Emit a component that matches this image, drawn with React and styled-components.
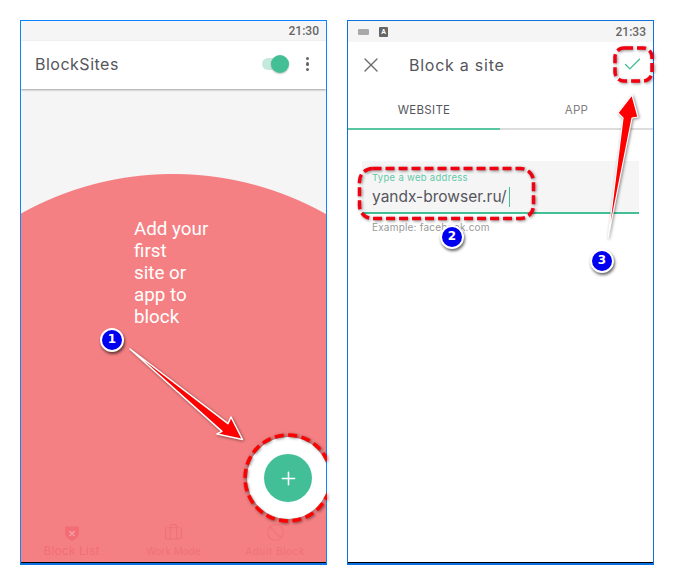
import React from "react";
import styled, { createGlobalStyle } from "styled-components";
import { Check, X, Briefcase, Ban, Plus } from "lucide-react";

const Global = createGlobalStyle`
  html, body { margin: 0; padding: 0; background: #fff; }
  body { font-family: "Roboto", "Liberation Sans", sans-serif; }
`;

const Page = styled.div`
  position: relative;
  width: 674px;
  height: 585px;
  box-sizing: border-box;
  padding: 20px;
  display: flex;
  gap: 20px;
  overflow: hidden;
`;

const Phone = styled.section`
  position: relative;
  isolation: isolate;
  width: 307px;
  height: 545px;
  box-sizing: border-box;
  border: 1px solid ${(p) => p.$edge};
  border-bottom: 2px solid #0a6fe0;
  display: flex;
  flex-direction: column;
  overflow: hidden;
  background: #fff;
`;

const BottomLine = styled.div`
  height: 1px;
  flex: none;
  background: #000;
`;

const StatusBar = styled.div`
  height: ${(p) => p.$h}px;
  flex: none;
  background: #f5f5f5;
  display: flex;
  align-items: center;
  justify-content: space-between;
  padding: 0 7px 0 10px;
  font: 500 12px "Roboto", sans-serif;
  color: #666;
`;

const StatusIcons = styled.div`
  display: flex;
  align-items: center;
  gap: 10px;
`;

const KeyIcon = styled.div`
  width: 11px;
  height: 6px;
  background: #a9a9a9;
  border-radius: 1px;
`;

const AIcon = styled.div`
  width: 9px;
  height: 10px;
  background: #666;
  border-radius: 1px;
  color: #fff;
  font: 700 7px/10px "Roboto", sans-serif;
  text-align: center;
`;

const Clock = styled.span`
  margin-left: auto;
`;

const AppBar = styled.header`
  height: 48px;
  flex: none;
  box-sizing: border-box;
  position: relative;
  z-index: 1;
  background: #fff;
  box-shadow: ${(p) => (p.$flat ? "none" : "0 1px 2px rgba(0, 0, 0, 0.35)")};
  display: flex;
  align-items: center;
  padding: 0 14px ${(p) => (p.$flat ? 3 : 2)}px;
`;

const Title = styled.h1`
  margin: 0;
  font: 400 16px "Inter", sans-serif;
  letter-spacing: 0.5px;
  color: #55565c;
  flex: 1;
`;

const Toggle = styled.div`
  position: relative;
  width: 22px;
  height: 12px;
  border-radius: 6px;
  background: #c5e9dd;
  margin-right: 22px;
`;

const Thumb = styled.div`
  position: absolute;
  top: -3px;
  right: -5px;
  width: 18px;
  height: 18px;
  border-radius: 50%;
  background: #43bf95;
  box-shadow: 0 1px 2px rgba(0, 0, 0, 0.25);
`;

const Dots = styled.div`
  display: flex;
  flex-direction: column;
  gap: 2px;
  margin-right: 3px;
`;

const Dot = styled.span`
  width: 3.5px;
  height: 3.5px;
  border-radius: 50%;
  background: #666;
`;

const Main = styled.main`
  flex: 1;
  display: flex;
  flex-direction: column;
  background: radial-gradient(circle at 152px 397px, #f58083 311.5px, #f5f5f5 312.5px);
`;

const Hero = styled.p`
  margin: 129px 0 0 113px;
  font: 400 18.8px/22px "Roboto", sans-serif;
  color: #fff;
  flex: 1;
`;

const Fab = styled.div`
  position: absolute;
  left: 226px;
  top: 416px;
  width: 82px;
  height: 82px;
  border-radius: 50%;
  background: #fff;
  box-shadow: 0 0 5px 1px rgba(90, 90, 90, 0.5);
  display: flex;
  align-items: center;
  justify-content: center;
`;

const FabInner = styled.div`
  width: 48px;
  height: 48px;
  border-radius: 50%;
  background: #43bf98;
  display: flex;
  align-items: center;
  justify-content: center;
  color: #fff;
`;

const Nav = styled.nav`
  height: 42px;
  display: grid;
  grid-template-columns: repeat(3, 1fr);
  padding-bottom: 5px;
`;

const NavItem = styled.div`
  display: flex;
  flex-direction: column;
  align-items: center;
  justify-content: flex-end;
  gap: 3px;
  color: ${(p) => p.$color};
  font: 400 ${(p) => p.$size}px/12px "Inter", sans-serif;
  letter-spacing: ${(p) => p.$ls}px;
  white-space: nowrap;
`;

const WhiteBody = styled.div`
  flex: 1;
  display: flex;
  flex-direction: column;
`;

const CloseSlot = styled.div`
  flex: none;
  width: 50px;
  display: flex;
  color: #6b6b6b;
  margin-left: -3px;
`;

const FormTitle = styled(Title)`
  letter-spacing: 0.75px;
`;

const CheckSlot = styled.div`
  color: #43bf95;
  display: flex;
  margin-right: -4px;
`;

const Tabs = styled.div`
  height: 40px;
  flex: none;
  display: grid;
  grid-template-columns: 152px 1fr;
`;

const Tab = styled.div`
  display: flex;
  align-items: center;
  justify-content: center;
  box-sizing: border-box;
  padding-top: 2px;
  font: 400 11.5px "Inter", sans-serif;
  letter-spacing: 0.3px;
  color: ${(p) => (p.$active ? "#55565c" : "#808080")};
  border-bottom: 2px solid ${(p) => (p.$active ? "#58c6a2" : "#dcdcdc")};
`;

const Field = styled.div`
  margin: 31px 14px 0 14px;
  height: 53px;
  box-sizing: border-box;
  background: #f5f5f5;
  border-bottom: 2px solid #43bf98;
  padding: 11px 10px 0;
`;

const FieldLabel = styled.div`
  font: 400 9.5px/12px "Inter", sans-serif;
  letter-spacing: 0.3px;
  color: #63c9a8;
`;

const FieldValue = styled.div`
  font: 400 15.5px/22px "Inter", sans-serif;
  color: #55565c;
  margin-top: 2px;
  display: flex;
  align-items: center;
`;

const Caret = styled.span`
  width: 1.5px;
  height: 20px;
  background: #43bf98;
  margin-left: 2px;
`;

const Helper = styled.div`
  margin: 7px 0 0 24px;
  font: 400 10px/13px "Inter", sans-serif;
  letter-spacing: 0.2px;
  color: #9a9a9a;
`;

const Overlay = styled.svg`
  position: absolute;
  inset: 0;
  pointer-events: none;
  filter: drop-shadow(1px 1.5px 1.5px rgba(0, 0, 0, 0.45));
`;

const Badge = styled.div`
  position: absolute;
  left: ${(p) => p.$x - 12}px;
  top: ${(p) => p.$y - 12}px;
  width: 24px;
  height: 24px;
  box-sizing: border-box;
  border-radius: 50%;
  border: 2.5px solid #fff;
  background: #0000f0;
  color: #fff;
  font: 700 12px/19px "DejaVu Sans", sans-serif;
  text-align: center;
  box-shadow: 1px 2px 3px rgba(0, 0, 0, 0.6);
`;

export default function App() {
  return (
    <Page>
      <Global />
      <Phone $edge="#0a84ff">
        <StatusBar $h={20}>
          <Clock>21:30</Clock>
        </StatusBar>
        <AppBar>
          <Title>BlockSites</Title>
          <Toggle>
            <Thumb />
          </Toggle>
          <Dots>
            <Dot />
            <Dot />
            <Dot />
          </Dots>
        </AppBar>
        <Main>
          <Hero>
            Add your
            <br />
            first
            <br />
            site or
            <br />
            app to
            <br />
            block
          </Hero>
          <Nav>
            <NavItem $color="#f26d76" $size={11.5} $ls={0.35}>
              <svg width="18" height="18" viewBox="0 0 18 18">
                <path
                  d="M2 2.5 L16 2.5 L16 9.5 Q15.5 14 9 17 Q2.5 14 2 9.5 Z"
                  fill="#f26d76"
                />
                <path d="M6.5 7 L11.5 12 M11.5 7 L6.5 12" stroke="#f79ca0" strokeWidth="1.6" />
              </svg>
              Block List
            </NavItem>
            <NavItem $color="#ee7379" $size={10} $ls={0}>
              <Briefcase size={19} strokeWidth={1.5} />
              Work Mode
            </NavItem>
            <NavItem $color="#ee7379" $size={10} $ls={0.55}>
              <Ban size={19} strokeWidth={1.3} />
              Adult Block
            </NavItem>
          </Nav>
        </Main>
        <BottomLine />
        <Fab>
          <FabInner>
            <Plus size={21} strokeWidth={1.8} />
          </FabInner>
        </Fab>
      </Phone>

      <Phone $edge="#1070e0">
        <StatusBar $h={21}>
          <StatusIcons>
            <KeyIcon />
            <AIcon>A</AIcon>
          </StatusIcons>
          <Clock>21:33</Clock>
        </StatusBar>
        <AppBar $flat>
          <CloseSlot>
            <X size={24} strokeWidth={1.4} />
          </CloseSlot>
          <FormTitle>Block a site</FormTitle>
          <CheckSlot>
            <Check size={21} strokeWidth={1.6} />
          </CheckSlot>
        </AppBar>
        <WhiteBody>
          <Tabs>
            <Tab $active>WEBSITE</Tab>
            <Tab>APP</Tab>
          </Tabs>
          <Field>
            <FieldLabel>Type a web address</FieldLabel>
            <FieldValue>
              yandx-browser.ru/
              <Caret />
            </FieldValue>
          </Field>
          <Helper>Example: facebook.com</Helper>
        </WhiteBody>
        <BottomLine />
      </Phone>

      <Overlay width="674" height="585" viewBox="0 0 674 585">
        <defs>
          <clipPath id="leftPhone">
            <rect x="20" y="20" width="307" height="545" />
          </clipPath>
        </defs>
        <circle
          clipPath="url(#leftPhone)"
          cx="288"
          cy="478"
          r="43"
          fill="none"
          stroke="#ff0000"
          strokeWidth="3.5"
          strokeDasharray="9 4.5"
        />
        <rect
          x="359.5"
          y="168.5"
          width="174"
          height="50"
          rx="13"
          fill="none"
          stroke="#f00010"
          strokeWidth="3.5"
          strokeDasharray="9 4"
        />
        <rect
          x="615"
          y="48"
          width="37"
          height="33"
          rx="9"
          fill="none"
          stroke="#f00010"
          strokeWidth="3.5"
          strokeDasharray="9 4"
        />
        <polygon
          points="130,349 228,423.6 231,417 242.5,439.5 217,434 221.9,431.4"
          fill="#ff0000"
          stroke="#fff"
          strokeWidth="1.5"
          strokeLinejoin="round"
        />
        <polygon
          points="608,238 623,118 618,113 632,95 638,117 632,118"
          fill="#ff0000"
          stroke="#fff"
          strokeWidth="1.2"
          strokeLinejoin="round"
        />
      </Overlay>
      <Badge $x={112} $y={340}>1</Badge>
      <Badge $x={452} $y={237}>2</Badge>
      <Badge $x={602} $y={261}>3</Badge>
    </Page>
  );
}
